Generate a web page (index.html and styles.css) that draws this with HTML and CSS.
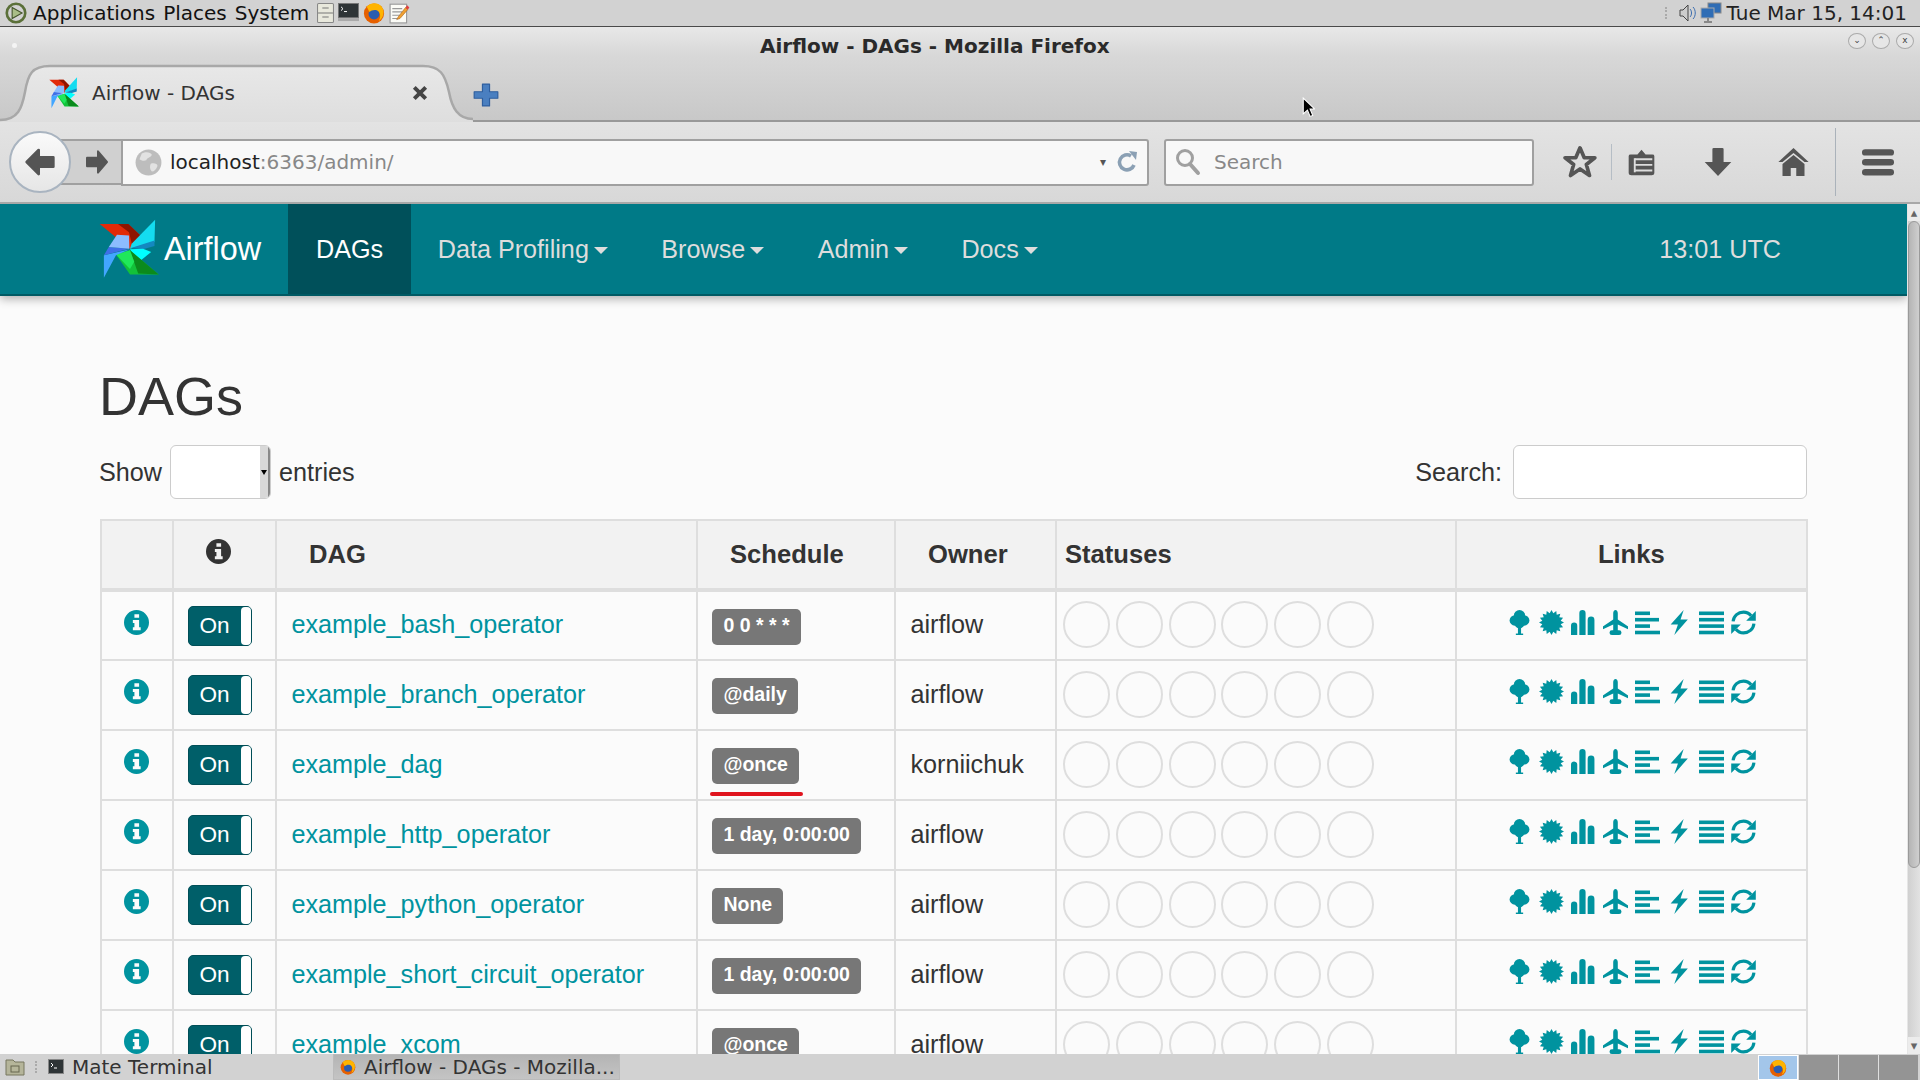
FILE: index.html
```html
<!DOCTYPE html>
<html lang="en">
<head>
<meta charset="utf-8">
<title>Airflow - DAGs - Mozilla Firefox</title>
<link rel="stylesheet" href="styles.css">
</head>
<body>
<svg class="defs" width="0" height="0">
  <defs>
    <symbol id="pin" viewBox="30 60 190 182" preserveAspectRatio="none">
      <polygon fill="#e22a08" points="32,75 120,75 165,118 125,150"/>
      <polygon fill="#8f1500" points="88,75 120,75 165,118 133,146 122,100"/>
      <polygon fill="#14dcf0" points="202,62 130,135 125,150 200,130"/>
      <polygon fill="#1488c0" points="128,148 200,125 200,142 165,152"/>
      <polygon fill="#00ffff" points="125,152 165,150 190,160 150,192"/>
      <polygon fill="#13c13a" points="213,228 125,228 82,168 125,155"/>
      <polygon fill="#0b8a1c" points="125,155 213,228 150,225"/>
      <polygon fill="#1fe85a" points="125,155 82,168 125,212 138,190"/>
      <polygon fill="#42a6ff" points="45,238 45,170 125,152 82,170"/>
      <polygon fill="#3f6fe8" points="45,170 60,145 123,150"/>
      <polygon fill="#8cbcff" points="123,150 60,145 85,108 122,110"/>
    </symbol>
    <symbol id="i-info" viewBox="0 0 24 24">
      <path fill-rule="evenodd" d="M12 0a12 12 0 1 0 0 24a12 12 0 1 0 0-24zM10 4h4.500v3.500H10zM8.500 9.500H14.500V16.500H16V19.500H8.500V16.500H10V12.500H8.500z"/>
    </symbol>
    <symbol id="i-tree" viewBox="0 0 24 24">
      <circle cx="12" cy="5.500" r="5.500"/><circle cx="7.500" cy="10" r="5"/><circle cx="16.500" cy="10" r="5"/><circle cx="12" cy="12.500" r="5"/><rect x="10.500" y="12" width="3" height="12"/><rect x="8.500" y="22.600" width="7" height="1.400"/>
    </symbol>
    <symbol id="i-cert" viewBox="0 0 24 24">
      <polygon points="24,12 20.830,13.760 23.090,16.590 19.480,17 20.490,20.490 17,19.480 16.590,23.090 13.760,20.830 12,24 10.240,20.830 7.410,23.090 7,19.480 3.510,20.490 4.520,17 .91,16.590 3.170,13.760 0,12 3.170,10.240 .91,7.410 4.520,7 3.510,3.510 7,4.520 7.410,.91 10.240,3.170 12,0 13.760,3.170 16.590,.91 17,4.520 20.490,3.510 19.480,7 23.090,7.410 20.830,10.240"/>
    </symbol>
    <symbol id="i-signal" viewBox="0 0 24 24">
      <path d="M0 24V15a3 3 0 0 1 6 0V24zM8 24V3a3 3 0 0 1 6 0V24zM16 24V9.500a3 3 0 0 1 6.500 0V24z"/>
    </symbol>
    <symbol id="i-plane" viewBox="0 0 24 24">
      <path d="M12 0c1.300 0 2.200 1.300 2.200 3V9L23.800 15.500a.8.8 0 0 1 .2 1.500V18.500L14.200 13.800V19.500H15.500a2 2 0 0 1 0 4.500H8.500a2 2 0 0 1 0-4.500H9.800V13.800L0 18.500V17a.8.8 0 0 1 .2-1.500L9.800 9V3C9.800 1.300 10.700 0 12 0z"/>
    </symbol>
    <symbol id="i-left" viewBox="0 0 25 24">
      <rect width="15" height="3.600" y="1"/><rect width="24" height="3.600" y="7.400"/><rect width="15" height="3.600" y="13.800"/><rect width="25" height="3.600" y="20.200"/>
    </symbol>
    <symbol id="i-flash" viewBox="0 0 17 24">
      <polygon points="12.500,0 0,14 7,14 3.500,24 16.500,9 9.500,9"/>
    </symbol>
    <symbol id="i-just" viewBox="0 0 25 24">
      <rect width="25" height="3.600" y="1"/><rect width="25" height="3.600" y="7.400"/><rect width="25" height="3.600" y="13.800"/><rect width="25" height="3.600" y="20.200"/>
    </symbol>
    <symbol id="i-refresh" viewBox="0 0 24 24">
      <path fill="none" stroke-width="3" d="M2 11C2.500 5.500 7 2 12 2c3 0 5.500 1.300 7.300 3.500M22 13c-.5 5.500-5 9-10 9c-3 0-5.500-1.300-7.300-3.500"/>
      <path stroke="none" d="M23.800 1v9.200h-9.200zM.2 23v-9.200h9.200z"/>
    </symbol>
    <symbol id="fx" viewBox="0 0 24 24">
      <circle cx="12" cy="12.500" r="11" fill="#e66000"/>
      <circle cx="12" cy="13" r="6" fill="#2a5db0"/>
      <path fill="#ffb400" d="M4 5c5-5 13-5 17 1c3 5 1 12-4 15c3-5 2-10-2-12c-3-1-6 0-8 2c-1-2-2-4-3-6z"/>
    </symbol>
    <linearGradient id="tabfill" x1="0" y1="0" x2="0" y2="1"><stop offset="0" stop-color="#e8e8e8"/><stop offset="1" stop-color="#dedede"/></linearGradient>
  </defs>
</svg>

<div class="desktop">
  <header class="panel">
    <div class="panel-left">
      <svg class="mate" viewBox="0 0 20 20"><circle cx="10" cy="10" r="8.400" fill="none" stroke="#5b7039" stroke-width="2.400"/><path d="M6.500 5l9 5-9 5z" fill="#a9bd87" stroke="#44552b"/></svg>
      <span>Applications</span><span>Places</span><span>System</span>
      <span class="launchers">
        <svg class="lc1" viewBox="0 0 16 20" preserveAspectRatio="none"><rect x=".5" y=".5" width="15" height="19" rx="1" fill="#e8e8dc" stroke="#888"/><path d="M1 10h14M5 5h6M5 14h6" stroke="#777"/></svg>
        <svg class="lc2" viewBox="0 0 21 20" preserveAspectRatio="none"><rect x=".5" y=".5" width="20" height="15" fill="#2e3436" stroke="#777"/><rect y="16" width="21" height="3" fill="#aaa"/><path d="M3 4l2 2-2 2M6 9h3" stroke="#fff" fill="none"/></svg>
        <svg class="lc3" viewBox="0 0 24 24"><use href="#fx"/></svg>
        <svg class="lc3" viewBox="0 0 20 20"><rect x="1" y="2" width="15" height="17" fill="#fbfbf6" stroke="#999"/><path d="M3 6h9M3 9h9M3 12h7M3 15h5" stroke="#999"/><path d="M8 14l7-9 2 2-7 8-3 1z" fill="#f0a030" stroke="#a05a10" stroke-width=".5"/><path d="M15 5l1.500-2 2 2-1.500 2z" fill="#e04040"/></svg>
      </span>
    </div>
    <div class="panel-right">
      <span class="grip"></span>
      <svg class="tray" viewBox="0 0 22 22"><path d="M4 8h3l5-5v16l-5-5H4z" fill="#ccc" stroke="#444"/><path d="M14 7c2 2 2 6 0 8M17 5c3 3 3 9 0 12" fill="none" stroke="#3a6db0"/></svg>
      <svg class="tray" viewBox="0 0 22 22"><rect x="8" y="1" width="13" height="10" fill="#2f6db5" stroke="#888"/><rect x="1" y="6" width="13" height="10" fill="#2f6db5" stroke="#aaa"/><path d="M4 20h8M8 16v4" stroke="#888" stroke-width="2"/></svg>
      <span class="datetime">Tue Mar 15, 14:01</span>
    </div>
  </header>

  <section class="chrome-top">
    <div class="title-row">
      <span class="title-dot"></span>
      <strong class="win-title">Airflow - DAGs - Mozilla Firefox</strong>
      <span class="win-btns">
        <span class="win-btn">&#8964;</span><span class="win-btn">&#8963;</span><span class="win-btn">x</span>
      </span>
    </div>
    <div class="tab-row">
      <div class="tab">
        <svg class="tab-shape" viewBox="0 0 473 58"><path d="M0 56C18 56 22 44 25 28C28 10 32 2 50 2H423C440 2 445 10 449 28C452 44 458 55 473 55V58H0z" fill="url(#tabfill)"/><path d="M0 56C18 56 22 44 25 28C28 10 32 2 50 2H423C440 2 445 10 449 28C452 44 458 55 473 55" fill="none" stroke="#a8a8a8" stroke-width="2.500"/></svg>
        <svg class="favicon"><use href="#pin"/></svg>
        <span class="tab-text">Airflow - DAGs</span>
        <svg class="tab-close" viewBox="0 0 14 14"><path d="M2 2l10 10M12 2L2 12" stroke="#444" stroke-width="3.400"/></svg>
      </div>
      <svg class="new-tab" viewBox="0 0 22 22" preserveAspectRatio="none"><path d="M8 1h6v7h7v6h-7v7H8v-7H1V8h7z" fill="#4a7fc0" stroke="#2f5f9f" stroke-linejoin="round"/></svg>
    </div>
  </section>

  <nav class="toolbar">
    <div class="back"><svg viewBox="0 0 24 24"><path d="M11 3L2 12l9 9v-5.500h11v-7H11z" fill="#555" stroke="#555" stroke-width="2" stroke-linejoin="round"/></svg></div>
    <div class="forward"><svg viewBox="0 0 24 24" preserveAspectRatio="none"><path d="M13 3l9 9-9 9v-5.500H2v-7h11z" fill="#555" stroke="#555" stroke-width="2" stroke-linejoin="round"/></svg></div>
    <div class="urlbar">
      <svg class="globe" viewBox="0 0 24 24"><circle cx="12" cy="12" r="11.500" fill="#bdbdbd"/><path d="M6 4c4-2 8-1 9 1c-1 3-4 2-5 5c-2 1-5 0-6-1zM14 13c3-1 6 0 6 2c-1 3-3 5-5 5c-2-2-2-5-1-7z" fill="#e2e2e2"/></svg>
      <span class="host">localhost</span><span class="rest">:6363/admin/</span>
      <span class="url-end">
        <span class="drop">&#9662;</span>
        <svg class="reload" viewBox="0 0 22 24"><path d="M18 15a7.500 7.500 0 1 1-3-9" fill="none" stroke="#8ba0b4" stroke-width="3.600"/><path d="M13 1l8 1-1 8z" fill="#8ba0b4"/></svg>
      </span>
    </div>
    <div class="searchbar">
      <svg class="mag" viewBox="0 0 26 28"><circle cx="10" cy="10" r="7.500" fill="none" stroke="#a0a0a0" stroke-width="3"/><path d="M15 16l8 9" stroke="#a0a0a0" stroke-width="4" stroke-linecap="round"/></svg>
      <span>Search</span>
    </div>
    <div class="tools">
      <svg class="t-star" viewBox="0 0 24 24" preserveAspectRatio="none"><path d="M12 2l3 7h7.500l-6 4.800 2.200 7.700-6.700-4.600-6.700 4.600 2.200-7.700-6-4.800H9z" fill="none" stroke="#555" stroke-width="2.600" stroke-linejoin="round"/></svg>
      <span class="sep"></span>
      <svg class="t-clip" viewBox="0 0 20 32" preserveAspectRatio="none"><path d="M2 8h5l3-5 3 5h5a1.500 1.500 0 0 1 1.500 1.500V28a2 2 0 0 1-2 2H2.500a2 2 0 0 1-2-2V9.500A1.500 1.500 0 0 1 2 8z" fill="#555"/><path d="M5 13h13M5 19h13M5 25h13" stroke="#ddd" stroke-width="2"/><path d="M5 12v15" stroke="#ddd" stroke-width="1.400"/></svg>
      <svg class="t-down" viewBox="0 0 20 32" preserveAspectRatio="none"><path d="M7 1h6a1 1 0 0 1 1 1v14h5.500L10 31 .5 16H6V2a1 1 0 0 1 1-1z" fill="#555"/></svg>
      <svg class="t-home" viewBox="0 0 24 30" preserveAspectRatio="none"><path d="M12 1L1 15h3l8-9 8 9h3z" fill="#555"/><path d="M12 8l-8 9v12h6v-8h4v8h6V17z" fill="#555"/></svg>
      <span class="sep tall"></span>
      <svg class="t-menu" viewBox="0 0 24 24" preserveAspectRatio="none"><rect x="0" y="1" width="24" height="5.500" rx="2.500" fill="#555"/><rect x="0" y="9.500" width="24" height="5.500" rx="2.500" fill="#555"/><rect x="0" y="18" width="24" height="5.500" rx="2.500" fill="#555"/></svg>
    </div>
  </nav>

  <div class="viewport">
    <main class="page">
      <div class="af-nav">
        <a class="brand"><svg class="logo"><use href="#pin"/></svg><span>Airflow</span></a>
        <a class="nav-item active">DAGs</a>
        <a class="nav-item">Data Profiling<i class="caret"></i></a>
        <a class="nav-item">Browse<i class="caret"></i></a>
        <a class="nav-item">Admin<i class="caret"></i></a>
        <a class="nav-item">Docs<i class="caret"></i></a>
        <span class="clock">13:01 UTC</span>
      </div>
      <div class="content">
        <h1>DAGs</h1>
        <div class="filters">
          <div class="show">Show <span class="select"><span class="sel-btn"></span></span> entries</div>
          <div class="search">Search: <span class="input"></span></div>
        </div>
        <table class="dags">
          <colgroup><col class="c1"><col class="c2"><col class="c3"><col class="c4"><col class="c5"><col class="c6"><col class="c7"></colgroup>
          <thead>
            <tr>
              <th></th>
              <th class="center"><svg class="ico info-h"><use href="#i-info"/></svg></th>
              <th class="th-dag">DAG</th>
              <th class="th-dag">Schedule</th>
              <th class="th-dag">Owner</th>
              <th>Statuses</th>
              <th class="center th-links">Links</th>
            </tr>
          </thead>
          <tbody id="rows">
            <tr><td class="center"><svg class="ico info"><use href="#i-info"/></svg></td><td><span class="toggle">On</span></td><td class="txt"><a class="dag">example_bash_operator</a></td><td><span class="label">0 0 * * *</span></td><td class="txt">airflow</td><td><div class="circles"><i></i><i></i><i></i><i></i><i></i><i></i></div></td><td class="links"><svg class="l"><use href="#i-tree"/></svg><svg class="l"><use href="#i-cert"/></svg><svg class="l"><use href="#i-signal"/></svg><svg class="l"><use href="#i-plane"/></svg><svg class="l"><use href="#i-left"/></svg><svg class="l"><use href="#i-flash"/></svg><svg class="l"><use href="#i-just"/></svg><svg class="l r"><use href="#i-refresh"/></svg></td></tr>
            <tr><td class="center"><svg class="ico info"><use href="#i-info"/></svg></td><td><span class="toggle">On</span></td><td class="txt"><a class="dag">example_branch_operator</a></td><td><span class="label">@daily</span></td><td class="txt">airflow</td><td><div class="circles"><i></i><i></i><i></i><i></i><i></i><i></i></div></td><td class="links"><svg class="l"><use href="#i-tree"/></svg><svg class="l"><use href="#i-cert"/></svg><svg class="l"><use href="#i-signal"/></svg><svg class="l"><use href="#i-plane"/></svg><svg class="l"><use href="#i-left"/></svg><svg class="l"><use href="#i-flash"/></svg><svg class="l"><use href="#i-just"/></svg><svg class="l r"><use href="#i-refresh"/></svg></td></tr>
            <tr><td class="center"><svg class="ico info"><use href="#i-info"/></svg></td><td><span class="toggle">On</span></td><td class="txt"><a class="dag">example_dag</a></td><td class="marked"><span class="label">@once</span><span class="redline"></span></td><td class="txt">korniichuk</td><td><div class="circles"><i></i><i></i><i></i><i></i><i></i><i></i></div></td><td class="links"><svg class="l"><use href="#i-tree"/></svg><svg class="l"><use href="#i-cert"/></svg><svg class="l"><use href="#i-signal"/></svg><svg class="l"><use href="#i-plane"/></svg><svg class="l"><use href="#i-left"/></svg><svg class="l"><use href="#i-flash"/></svg><svg class="l"><use href="#i-just"/></svg><svg class="l r"><use href="#i-refresh"/></svg></td></tr>
            <tr><td class="center"><svg class="ico info"><use href="#i-info"/></svg></td><td><span class="toggle">On</span></td><td class="txt"><a class="dag">example_http_operator</a></td><td><span class="label">1 day, 0:00:00</span></td><td class="txt">airflow</td><td><div class="circles"><i></i><i></i><i></i><i></i><i></i><i></i></div></td><td class="links"><svg class="l"><use href="#i-tree"/></svg><svg class="l"><use href="#i-cert"/></svg><svg class="l"><use href="#i-signal"/></svg><svg class="l"><use href="#i-plane"/></svg><svg class="l"><use href="#i-left"/></svg><svg class="l"><use href="#i-flash"/></svg><svg class="l"><use href="#i-just"/></svg><svg class="l r"><use href="#i-refresh"/></svg></td></tr>
            <tr><td class="center"><svg class="ico info"><use href="#i-info"/></svg></td><td><span class="toggle">On</span></td><td class="txt"><a class="dag">example_python_operator</a></td><td><span class="label">None</span></td><td class="txt">airflow</td><td><div class="circles"><i></i><i></i><i></i><i></i><i></i><i></i></div></td><td class="links"><svg class="l"><use href="#i-tree"/></svg><svg class="l"><use href="#i-cert"/></svg><svg class="l"><use href="#i-signal"/></svg><svg class="l"><use href="#i-plane"/></svg><svg class="l"><use href="#i-left"/></svg><svg class="l"><use href="#i-flash"/></svg><svg class="l"><use href="#i-just"/></svg><svg class="l r"><use href="#i-refresh"/></svg></td></tr>
            <tr><td class="center"><svg class="ico info"><use href="#i-info"/></svg></td><td><span class="toggle">On</span></td><td class="txt"><a class="dag">example_short_circuit_operator</a></td><td><span class="label">1 day, 0:00:00</span></td><td class="txt">airflow</td><td><div class="circles"><i></i><i></i><i></i><i></i><i></i><i></i></div></td><td class="links"><svg class="l"><use href="#i-tree"/></svg><svg class="l"><use href="#i-cert"/></svg><svg class="l"><use href="#i-signal"/></svg><svg class="l"><use href="#i-plane"/></svg><svg class="l"><use href="#i-left"/></svg><svg class="l"><use href="#i-flash"/></svg><svg class="l"><use href="#i-just"/></svg><svg class="l r"><use href="#i-refresh"/></svg></td></tr>
            <tr><td class="center"><svg class="ico info"><use href="#i-info"/></svg></td><td><span class="toggle">On</span></td><td class="txt"><a class="dag">example_xcom</a></td><td><span class="label">@once</span></td><td class="txt">airflow</td><td><div class="circles"><i></i><i></i><i></i><i></i><i></i><i></i></div></td><td class="links"><svg class="l"><use href="#i-tree"/></svg><svg class="l"><use href="#i-cert"/></svg><svg class="l"><use href="#i-signal"/></svg><svg class="l"><use href="#i-plane"/></svg><svg class="l"><use href="#i-left"/></svg><svg class="l"><use href="#i-flash"/></svg><svg class="l"><use href="#i-just"/></svg><svg class="l r"><use href="#i-refresh"/></svg></td></tr>
          </tbody>
        </table>
      </div>
    </main>
    <div class="scrollbar">
      <span class="sb-arrow">&#9652;</span>
      <span class="sb-thumb"></span>
      <span class="sb-track"></span>
      <span class="sb-arrow">&#9662;</span>
    </div>
  </div>

  <footer class="taskbar">
    <svg class="tb-folder" viewBox="0 0 20 20"><path d="M1 3h7l2 2h9v13H1z" fill="#b5b59a" stroke="#77775f"/><rect x="6" y="9" width="8" height="6" fill="none" stroke="#66664f"/></svg>
    <span class="tb-grip"></span>
    <div class="tb-item term"><svg viewBox="0 0 16 16"><rect x=".5" y=".5" width="15" height="14" fill="#2e3436" stroke="#888"/><path d="M3 4l2 2-2 2M6 9h3" stroke="#fff" fill="none"/></svg>Mate Terminal</div>
    <div class="tb-item ff"><svg viewBox="0 0 24 24"><use href="#fx"/></svg>Airflow - DAGs - Mozilla...</div>
    <div class="pager">
      <span class="ws on"><svg viewBox="0 0 24 24"><use href="#fx"/></svg></span><span class="ws"></span><span class="ws"></span><span class="ws"></span>
    </div>
  </footer>
  <svg class="cursor" viewBox="0 0 12 20"><path d="M1 1v15l4-3.500 2.500 6 2.500-1-2.500-6H12z" fill="#000" stroke="#fff"/></svg>
</div>
</body>
</html>
```

FILE: styles.css
```css
* { box-sizing: border-box; }
html, body { margin: 0; height: 100%; overflow: hidden; }
body { font-family: "DejaVu Sans", sans-serif; }
.defs { position: absolute; }
.desktop { width: 1920px; height: 1080px; display: flex; flex-direction: column; overflow: hidden; position: relative; background: #d2d2d2; }

/* top panel */
.panel { height: 27px; flex: none; display: flex; justify-content: space-between; align-items: center; background: #d2d2d2; border-bottom: 1px solid #4a4a4a; font-size: 20px; color: #111; padding: 0 13px 1px 5px; }
.panel-left { display: flex; align-items: center; gap: 8px; }
.mate { width: 22px; height: 22px; margin-right: -2px; }
.launchers { display: flex; gap: 4px; align-items: center; }
.lc1 { width: 17px; height: 20px; }
.lc2 { width: 21px; height: 19px; }
.lc3 { width: 22px; height: 22px; }
.panel-right { display: flex; align-items: center; gap: 2px; color: #222; }
.grip { width: 3px; height: 12px; border-left: 2px dotted #aaa; margin-right: 6px; }
.tray { width: 22px; height: 22px; }
.datetime { margin-left: 3px; }

/* window title + tabs */
.chrome-top { height: 95px; flex: none; background: linear-gradient(#e8e8e8, #d8d8d8 30%, #c8c8c8 100%); border-bottom: 2px solid #999; display: flex; flex-direction: column; }
.title-row { height: 37px; flex: none; display: grid; grid-template-columns: 748px auto 1fr; align-items: center; padding: 0 5px 0 12px; }
.title-dot { width: 5px; height: 5px; border-radius: 50%; background: #f4f4f4; }
.win-title { font-size: 20px; color: #2a2a2a; margin-top: 1px; }
.win-btns { justify-self: end; display: flex; gap: 6px; margin-top: -9px; margin-right: 1px; }
.win-btn { width: 18px; height: 16px; border-radius: 50%; border: 1px solid #aaa; background: #e6e6e6; font-size: 9px; line-height: 13px; text-align: center; color: #444; }
.tab-row { flex: 1; display: flex; align-items: center; }
.tab { width: 473px; height: 58px; display: flex; align-items: center; padding: 0 45px 0 49px; position: relative; align-self: flex-end; margin-bottom: -2px; }
.tab-shape { position: absolute; left: 0; top: 0; width: 473px; height: 58px; }
.favicon { width: 31px; height: 32px; flex: none; position: relative; }
.tab-text { font-size: 20px; color: #333; margin-left: 12px; flex: 1; position: relative; }
.tab-close { width: 16px; height: 16px; position: relative; }
.new-tab { width: 26px; height: 24px; margin-top: 5px; }

/* toolbar */
.toolbar { height: 82px; flex: none; background: linear-gradient(#e3e3e3, #d8d8d8); border-bottom: 2px solid #a8a8a8; display: flex; align-items: center; padding: 0 0 0 9px; position: relative; }
.back { width: 62px; height: 62px; flex: none; border-radius: 50%; background: linear-gradient(#fafafa, #e6e6e6); border: 2px solid #a9b4c0; display: flex; align-items: center; justify-content: center; position: relative; z-index: 1; }
.back svg { width: 32px; height: 32px; }
.forward { width: 72px; height: 46px; margin-left: -22px; padding-left: 34px; background: #d0d0d0; border: 2px solid #a0a0a0; border-right: none; display: flex; align-items: center; flex: none; }
.forward svg { width: 24px; height: 28px; }
.urlbar { width: 1028px; height: 47px; flex: none; background: #f8f8f8; border: 2px solid #a0a0a0; border-radius: 0 3px 3px 0; display: flex; align-items: center; padding: 0 9px 0 12px; font-size: 20px; }
.globe { width: 27px; height: 27px; margin-right: 8px; }
.host { color: #222; }
.rest { color: #888; }
.url-end { margin-left: auto; display: flex; align-items: center; gap: 10px; }
.drop { font-size: 12px; color: #555; }
.reload { width: 22px; height: 24px; }
.searchbar { width: 370px; height: 47px; flex: none; margin-left: 15px; background: #f8f8f8; border: 2px solid #a0a0a0; border-radius: 3px; display: flex; align-items: center; padding: 0 0 0 9px; gap: 13px; color: #888; font-size: 20px; }
.mag { width: 26px; height: 28px; }
.tools { flex: 1; display: flex; align-items: center; height: 100%; }
.t-star { width: 34px; height: 34px; margin-left: 29px; }
.sep { width: 1px; height: 36px; background: #b5bdc5; margin: 0 16px 0 14px; }
.sep.tall { height: 68px; margin: 0 26px 0 25px; background: #aab2ba; }
.t-clip { width: 27px; height: 30px; }
.t-down { width: 28px; height: 30px; margin-left: 49px; }
.t-home { width: 33px; height: 30px; margin-left: 45px; }
.t-menu { width: 32px; height: 28px; }

/* page */
.viewport { flex: 1; min-height: 0; display: flex; }
.page { flex: 1; min-width: 0; height: 100%; overflow: hidden; background: #fbfbfb; font-family: "Liberation Sans", Arial, sans-serif; font-size: 25.200px; color: #333; }
.af-nav { height: 92px; display: flex; align-items: stretch; background: #007a87; border-bottom: 2px solid #005a64; box-shadow: 0 3px 9px rgba(0,0,0,.3); padding-left: 100px; color: #ddd; }
.brand { display: flex; align-items: center; width: 188px; color: #fff; font-size: 32.400px; }
.logo { width: 62px; height: 60px; margin: 0 3px 0 -1px; flex: none; }
.nav-item { display: flex; align-items: center; padding: 0 26.700px; }
.nav-item.active { background: #00505a; color: #fff; width: 123px; padding-left: 28px; }
.caret { display: inline-block; margin-left: 5px; border-top: 7px solid #ddd; border-left: 7px solid transparent; border-right: 7px solid transparent; margin-top: 2px; }
.clock { margin-left: auto; margin-right: 126px; align-self: center; }
.content { padding: 0 100px 0 99px; }
h1 { font-weight: 500; font-size: 54px; line-height: 60px; margin: 70px 0 0; color: #333; }
.filters { display: flex; justify-content: space-between; align-items: center; margin-top: 19px; height: 54px; }
.show { display: flex; align-items: center; gap: 8px; }
.select { width: 101px; height: 54px; background: #fff; border: 1px solid #ccc; border-radius: 6px; display: flex; justify-content: flex-end; overflow: hidden; }
.sel-btn { width: 10px; background: #d8d8d8; border-right: 2px solid #888; position: relative; }
.sel-btn::after { content: ""; position: absolute; top: 24px; left: 1px; border-top: 5px solid #000; border-left: 3px solid transparent; border-right: 3px solid transparent; }
.search { display: flex; align-items: center; gap: 11px; }
.input { width: 294px; height: 54px; background: #fff; border: 1px solid #ccc; border-radius: 6px; }
.dags { border-collapse: collapse; table-layout: fixed; width: 1706px; margin: 20px 0 0 1px; }
.c1 { width: 72px; } .c2 { width: 103px; } .c3 { width: 421px; } .c4 { width: 198px; } .c5 { width: 161px; } .c6 { width: 400px; } .c7 { width: 351px; }
th, td { border: 2px solid #dedede; padding: 0 14.400px; height: 70px; font-size: 25.200px; }
td.txt { padding-bottom: 2px; }
thead th { height: 70px; background: #f2f2f2; text-align: left; border-bottom-width: 4px; padding-left: 8px; font-weight: 700; color: #333; font-size: 25.600px; }
thead th.th-dag { padding-left: 32px; }
thead th.th-links { padding-left: 14px; }
.center { text-align: center !important; }
.ico { display: inline-block; vertical-align: middle; fill: #00939f; }
.ico.info { width: 25px; height: 25px; margin-bottom: 7px; margin-left: -1px; }
.ico.info-h { width: 25px; height: 25px; fill: #333; margin-bottom: 6px; margin-left: -5px; }
.toggle { display: inline-flex; align-items: center; width: 64px; height: 40px; background: #005f69; color: #fff; border: 1px solid #004e57; border-radius: 5px; padding-left: 10px; position: relative; font-size: 22.600px; vertical-align: middle; }
.toggle::after { content: ""; position: absolute; right: 0; top: 0; bottom: 0; width: 10px; background: #fff; border-radius: 4px; }
.dag { color: #00939f; }
.label { display: inline-block; background: #777; color: #fff; font-weight: 700; font-size: 19.500px; line-height: 19px; padding: 7px 11px 10px; border-radius: 5px; white-space: nowrap; vertical-align: middle; margin-top: 2px; }
.marked { position: relative; }
.redline { position: absolute; left: 12px; bottom: 3px; width: 93px; height: 4px; background: #e0141e; border-radius: 2px; }
.circles { display: flex; gap: 5.700px; margin: 0 0 2px -8px; }
.circles i { width: 47px; height: 47px; border-radius: 50%; border: 2px solid #dedede; background: #fbfbfb; flex: none; }
.links { text-align: center; white-space: nowrap; padding: 0; }
.l { width: 25px; height: 25px; fill: #00939f; stroke: #00939f; stroke-width: 0; margin: 0 7px 7px 0; vertical-align: middle; }
.l:last-child { margin-right: 0; }

/* scrollbar */
.scrollbar { width: 13px; flex: none; background: linear-gradient(90deg, #d0d0d0, #e2e2e2); display: flex; flex-direction: column; border-left: 1px solid #e6e6e6; }
.sb-arrow { height: 17px; font-size: 13px; line-height: 17px; text-align: center; color: #666; flex: none; background: #ececec; }
.sb-thumb { height: 647px; background: linear-gradient(90deg, #b4b4b4, #cfcfcf); border: 1px solid #9a9a9a; border-radius: 6px; flex: none; }
.sb-track { flex: 1; }

/* bottom taskbar */
.taskbar { height: 26px; flex: none; background: #d2d2d2; display: flex; align-items: center; font-size: 20px; color: #333; position: relative; }
.tb-folder { width: 20px; height: 20px; margin-left: 5px; flex: none; }
.tb-grip { width: 3px; height: 12px; border-left: 2px dotted #aaa; margin: 0 10px 0 10px; flex: none; }
.tb-item { display: flex; align-items: center; height: 100%; flex: none; }
.tb-item svg { width: 16px; height: 16px; margin-right: 8px; }
.term { width: 285px; }
.ff { width: 287px; background: linear-gradient(#b4b4b4, #c4c4c4); padding-left: 6px; border: 1px solid #bbb; }
.pager { margin-left: auto; margin-right: 2px; display: flex; height: 100%; padding-top: 1px; }
.ws { width: 40px; background: #949494; border-left: 1px solid #e0e0e0; display: flex; align-items: center; justify-content: center; }
.ws.on { background: #a3c6ea; border: 1px solid #fff; }
.ws svg { width: 18px; height: 18px; }
.cursor { position: absolute; left: 1302px; top: 97px; width: 13px; height: 21px; }
```
